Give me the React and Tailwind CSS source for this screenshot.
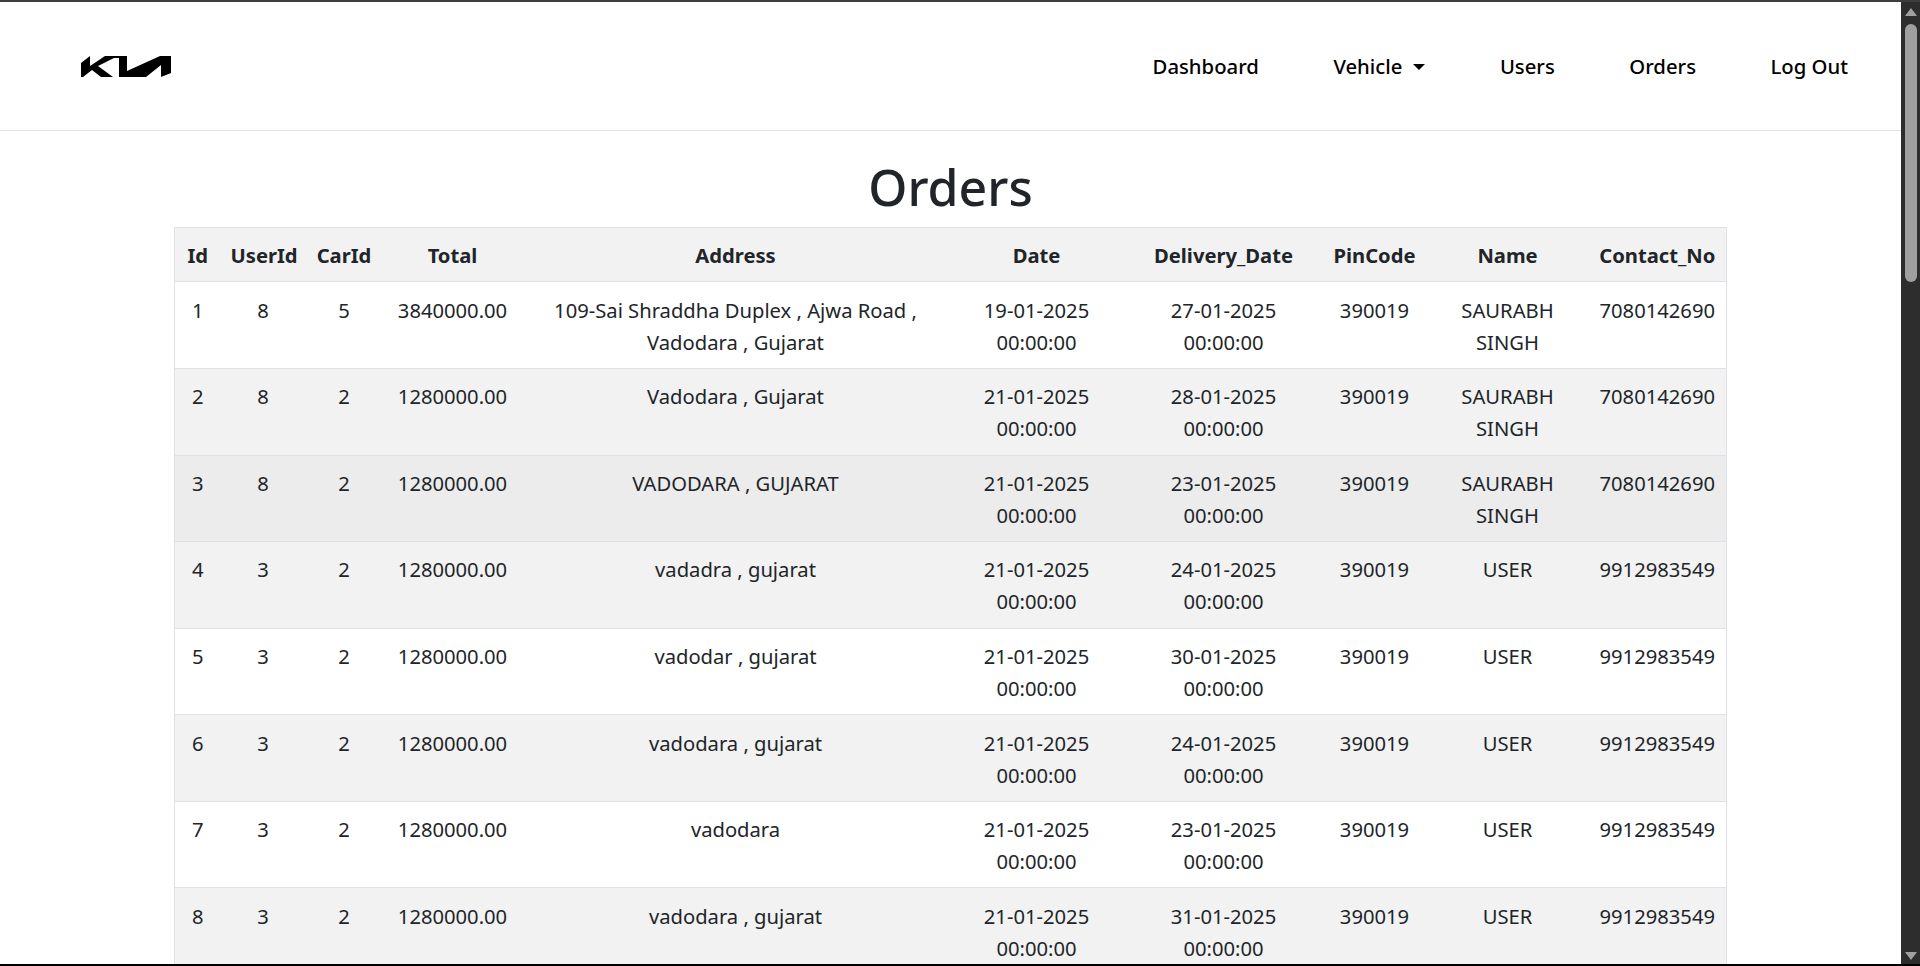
import React from 'react';

const orders = [
  { id: 1, userId: 8, carId: 5, total: '3840000.00', address: '109-Sai Shraddha Duplex , Ajwa Road , Vadodara , Gujarat', date: '19-01-2025', delivery: '27-01-2025', name: 'SAURABH SINGH', contact: '7080142690', bg: 'bg-white' },
  { id: 2, userId: 8, carId: 2, total: '1280000.00', address: 'Vadodara , Gujarat', date: '21-01-2025', delivery: '28-01-2025', name: 'SAURABH SINGH', contact: '7080142690', bg: 'bg-[#f2f2f2]' },
  { id: 3, userId: 8, carId: 2, total: '1280000.00', address: 'VADODARA , GUJARAT', date: '21-01-2025', delivery: '23-01-2025', name: 'SAURABH SINGH', contact: '7080142690', bg: 'bg-[#ececec]' },
  { id: 4, userId: 3, carId: 2, total: '1280000.00', address: 'vadadra , gujarat', date: '21-01-2025', delivery: '24-01-2025', name: 'USER', contact: '9912983549', bg: 'bg-[#f2f2f2]' },
  { id: 5, userId: 3, carId: 2, total: '1280000.00', address: 'vadodar , gujarat', date: '21-01-2025', delivery: '30-01-2025', name: 'USER', contact: '9912983549', bg: 'bg-white' },
  { id: 6, userId: 3, carId: 2, total: '1280000.00', address: 'vadodara , gujarat', date: '21-01-2025', delivery: '24-01-2025', name: 'USER', contact: '9912983549', bg: 'bg-[#f2f2f2]' },
  { id: 7, userId: 3, carId: 2, total: '1280000.00', address: 'vadodara', date: '21-01-2025', delivery: '23-01-2025', name: 'USER', contact: '9912983549', bg: 'bg-white' },
  { id: 8, userId: 3, carId: 2, total: '1280000.00', address: 'vadodara , gujarat', date: '21-01-2025', delivery: '31-01-2025', name: 'USER', contact: '9912983549', bg: 'bg-[#f2f2f2]' },
];

const columns = [
  { label: 'Id', width: 'w-[46px]' },
  { label: 'UserId', width: 'w-[85px]' },
  { label: 'CarId', width: 'w-[77px]' },
  { label: 'Total', width: 'w-[140px]' },
  { label: 'Address', width: 'w-[426px]' },
  { label: 'Date', width: 'w-[176px]' },
  { label: 'Delivery_Date', width: 'w-[198px]' },
  { label: 'PinCode', width: 'w-[104px]' },
  { label: 'Name', width: 'w-[162px]' },
  { label: 'Contact_No', width: 'w-[138px]' },
];

// coordinates are page pixels, hence the viewBox offset
const KiaLogo = () => (
  <svg viewBox="80 56 92 23" className="w-[92px] h-[23px] fill-black">
    <path d="M81 78V64L90 57V67L105 57H127V72L160 57H171V74L161 78V66L146 78H119V59H114L98 67L113 78H101L92 71L83 78Z" />
  </svg>
);

const Navbar = () => (
  <nav className="h-[129px] border-b border-[#dee2e6] flex items-center justify-between pl-[80px] pr-[53px] shrink-0">
    <KiaLogo />
    <div className="flex items-center gap-[74.5px] text-[20.3px] font-medium text-black mt-[1px]">
      <a>Dashboard</a>
      <a className="flex items-center gap-[11px]">
        Vehicle
        <span className="w-0 h-0 border-x-[6px] border-x-transparent border-t-[6px] border-t-black" />
      </a>
      <a>Users</a>
      <a>Orders</a>
      <a>Log Out</a>
    </div>
  </nav>
);

const OrdersTable = () => (
  <table className="table-fixed w-[1552px] mx-auto border-collapse text-center text-[20.2px] leading-[32px] text-[#212529]">
    <thead>
      <tr className="bg-[#f2f2f2]">
        {columns.map(col => (
          <th key={col.label} className={`${col.width} h-[54px] px-[10px] pt-[2px] font-bold border-y border-[#dee2e6] whitespace-nowrap first:border-l last:border-r`}>
            {col.label}
          </th>
        ))}
      </tr>
    </thead>
    <tbody>
      {orders.map(order => {
        const cells = [order.id, order.userId, order.carId, order.total, order.address, `${order.date} 00:00:00`, `${order.delivery} 00:00:00`, '390019', order.name, order.contact];
        return (
          <tr key={order.id} className={order.bg}>
            {cells.map((value, i) => (
              <td key={i} className={`align-top border-b border-[#dee2e6] first:border-l last:border-r ${order.id === 1 ? 'h-[87.57px] pt-[12.6px] pb-[9.6px]' : 'h-[86.57px] pt-[11.3px] pb-[9.9px]'} ${i === 5 || i === 6 ? 'px-[30px]' : 'px-[10px]'}`}>
                {value}
              </td>
            ))}
          </tr>
        );
      })}
    </tbody>
  </table>
);

const Scrollbar = () => (
  <div className="w-[19px] bg-[#2d2d2d] shrink-0 flex flex-col items-center pt-[6px]">
    <span className="w-0 h-0 border-x-[6px] border-x-transparent border-b-[8px] border-b-[#a0a0a0]" />
    <div className="w-[12px] h-[258px] mt-[8px] rounded-full bg-[#9f9f9f]" />
    <span className="mt-auto mb-[4px] w-0 h-0 border-x-[6px] border-x-transparent border-t-[8px] border-t-[#a0a0a0]" />
  </div>
);

const App = () => (
  <div className="h-screen flex flex-col overflow-hidden bg-white font-['Noto_Sans',sans-serif]">
    <div className="h-[2px] bg-[#3c3f3a] shrink-0" />
    <div className="flex-1 flex min-h-0">
      <main className="flex-1 min-w-0 overflow-hidden">
        <Navbar />
        <h1 className="text-center text-[50px] leading-[64px] font-medium text-[#212529] mt-[23.5px] mb-[8px]">Orders</h1>
        <OrdersTable />
      </main>
      <Scrollbar />
    </div>
    <div className="h-[2px] bg-black shrink-0" />
  </div>
);

export default App;
